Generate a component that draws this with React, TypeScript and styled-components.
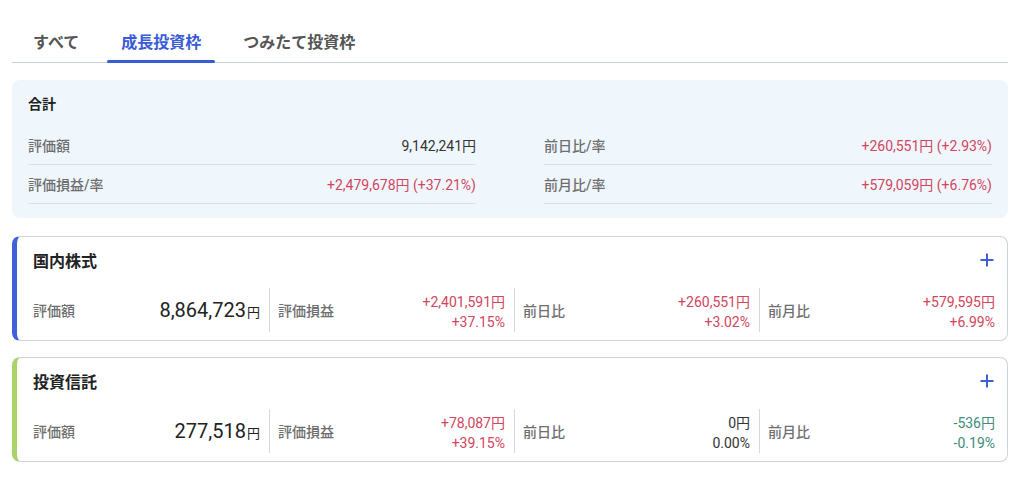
import styled, { createGlobalStyle } from 'styled-components';

const GlobalStyle = createGlobalStyle`
  html, body {
    margin: 0;
    padding: 0;
    background: #ffffff;
  }
  body {
    font-family: Roboto, 'Noto Sans CJK JP', sans-serif;
    color: #222;
  }
`;

type Tone = 'up' | 'down' | 'flat';

const toneColor = (tone: Tone) =>
  tone === 'up' ? '#d2455e' : tone === 'down' ? '#3f8c7c' : '#333';

const tabs = ['すべて', '成長投資枠', 'つみたて投資枠'];

const summary = [
  [
    { label: '評価額', value: '9,142,241円', tone: 'flat' as Tone },
    { label: '評価損益/率', value: '+2,479,678円 (+37.21%)', tone: 'up' as Tone },
  ],
  [
    { label: '前日比/率', value: '+260,551円 (+2.93%)', tone: 'up' as Tone },
    { label: '前月比/率', value: '+579,059円 (+6.76%)', tone: 'up' as Tone },
  ],
];

const assets = [
  {
    name: '国内株式',
    accent: '#4160d8',
    total: '8,864,723',
    diffs: [
      { label: '評価損益', yen: '+2,401,591円', rate: '+37.15%', tone: 'up' as Tone },
      { label: '前日比', yen: '+260,551円', rate: '+3.02%', tone: 'up' as Tone },
      { label: '前月比', yen: '+579,595円', rate: '+6.99%', tone: 'up' as Tone },
    ],
  },
  {
    name: '投資信託',
    accent: '#a8d46b',
    total: '277,518',
    diffs: [
      { label: '評価損益', yen: '+78,087円', rate: '+39.15%', tone: 'up' as Tone },
      { label: '前日比', yen: '0円', rate: '0.00%', tone: 'flat' as Tone },
      { label: '前月比', yen: '-536円', rate: '-0.19%', tone: 'down' as Tone },
    ],
  },
];

const PlusIcon = () => (
  <svg width="16" height="16" viewBox="0 0 16 16">
    <path d="M8 1.5v13M1.5 8h13" stroke="#3f5fd6" strokeWidth="2" />
  </svg>
);

const App = () => {
  return (
    <Page>
      <GlobalStyle />
      <TabBar>
        {tabs.map((t, i) => (
          <Tab key={t} $active={i === 1}>
            {t}
          </Tab>
        ))}
      </TabBar>

      <SummaryBox>
        <SummaryTitle>合計</SummaryTitle>
        <SummaryGrid>
          {summary.map((col, ci) => (
            <SummaryCol key={ci}>
              {col.map((row) => (
                <SummaryRow key={row.label}>
                  <Label>{row.label}</Label>
                  <SummaryValue $tone={row.tone}>{row.value}</SummaryValue>
                </SummaryRow>
              ))}
            </SummaryCol>
          ))}
        </SummaryGrid>
      </SummaryBox>

      {assets.map((a) => (
        <AssetCard key={a.name} $accent={a.accent}>
          <CardHead>
            <CardTitle>{a.name}</CardTitle>
            <PlusButton>
              <PlusIcon />
            </PlusButton>
          </CardHead>
          <CardRow>
            <Cell>
              <Label>評価額</Label>
              <BigValue>
                {a.total}
                <Yen>円</Yen>
              </BigValue>
            </Cell>
            {a.diffs.map((d) => (
              <Cell key={d.label} $divided>
                <Label>{d.label}</Label>
                <DiffValue $tone={d.tone}>
                  <span>{d.yen}</span>
                  <span>{d.rate}</span>
                </DiffValue>
              </Cell>
            ))}
          </CardRow>
        </AssetCard>
      ))}
    </Page>
  );
};

const Page = styled.div`
  width: 996px;
  padding: 0 16px 0 12px;
  display: flex;
  flex-direction: column;
`;

const TabBar = styled.div`
  display: flex;
  gap: 14px;
  padding: 21px 0 0 7px;
  border-bottom: 1px solid #c9d0e2;
  margin-bottom: 17px;
`;

const Tab = styled.div<{ $active?: boolean }>`
  position: relative;
  padding: 8px 14px 9px;
  font-size: 16px;
  font-weight: 700;
  color: ${(p) => (p.$active ? '#3a5bd6' : '#555')};

  &::after {
    content: '';
    display: ${(p) => (p.$active ? 'block' : 'none')};
    position: absolute;
    left: 0;
    right: 0;
    bottom: -1px;
    height: 3px;
    border-radius: 2px;
    background: #3a5bd6;
  }
`;

const SummaryBox = styled.div`
  background: #eff7fd;
  border-radius: 8px;
  padding: 13px 16px 14px;
  margin-bottom: 18px;
`;

const SummaryTitle = styled.div`
  font-size: 14px;
  font-weight: 700;
  color: #222;
  margin-bottom: 13px;
`;

const SummaryGrid = styled.div`
  display: grid;
  grid-template-columns: 1fr 1fr;
  column-gap: 68px;
`;

const SummaryCol = styled.div`
  display: flex;
  flex-direction: column;
`;

const SummaryRow = styled.div`
  display: flex;
  justify-content: space-between;
  align-items: center;
  height: 38px;
  border-bottom: 1px solid #d8dfe6;
`;

const Label = styled.span`
  font-size: 14px;
  font-weight: 500;
  color: #6e6e6e;
`;

const SummaryValue = styled.span<{ $tone: Tone }>`
  font-size: 14px;
  color: ${(p) => toneColor(p.$tone)};
`;

const AssetCard = styled.div<{ $accent: string }>`
  border: 1px solid #cdd3dc;
  border-left: 5px solid ${(p) => p.$accent};
  border-radius: 8px;
  padding: 10px 12px 8px 16px;
  margin-bottom: 16px;
`;

const CardHead = styled.div`
  display: flex;
  justify-content: space-between;
  align-items: center;
  height: 26px;
  margin-bottom: 15px;
`;

const CardTitle = styled.div`
  font-size: 16px;
  font-weight: 700;
  color: #222;
`;

const PlusButton = styled.div`
  display: flex;
  align-items: center;
`;

const CardRow = styled.div`
  display: grid;
  grid-template-columns: repeat(4, 1fr);
  column-gap: 18px;
`;

const Cell = styled.div<{ $divided?: boolean }>`
  position: relative;
  display: flex;
  justify-content: space-between;
  align-items: center;
  height: 44px;

  &::before {
    content: '';
    display: ${(p) => (p.$divided ? 'block' : 'none')};
    position: absolute;
    left: -9px;
    top: 0;
    bottom: 0;
    width: 1px;
    background: #d5d9df;
  }
`;

const BigValue = styled.span`
  font-size: 20px;
  color: #222;
`;

const Yen = styled.span`
  font-size: 13px;
  margin-left: 1px;
`;

const DiffValue = styled.span<{ $tone: Tone }>`
  display: flex;
  flex-direction: column;
  align-items: flex-end;
  gap: 3px;
  font-size: 14px;
  color: ${(p) => toneColor(p.$tone)};
`;

export default App;
